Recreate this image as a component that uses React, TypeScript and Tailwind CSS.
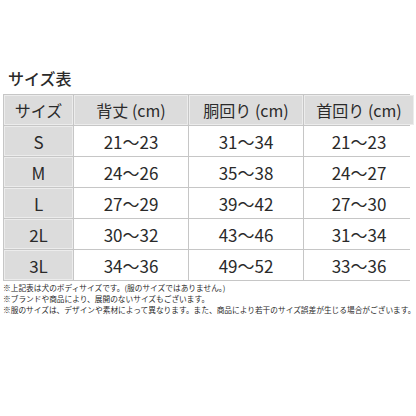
import React from "react";

const headers = ["サイズ", "背丈 (cm)", "胴回り (cm)", "首回り (cm)"];
const rows = [
  ["S", "21〜23", "31〜34", "21〜23"],
  ["M", "24〜26", "35〜38", "24〜27"],
  ["L", "27〜29", "39〜42", "27〜30"],
  ["2L", "30〜32", "43〜46", "31〜34"],
  ["3L", "34〜36", "49〜52", "33〜36"],
];

export default function App() {
  return (
    <div
      className="w-[416px] h-[416px] bg-white overflow-hidden text-[#2a2a2a]"
      style={{ fontFamily: '"Noto Sans CJK JP", "Noto Sans", sans-serif' }}
    >
      <div className="pt-[67px] pl-[8px] text-[16px] leading-[22px] font-medium">サイズ表</div>
      <div className="mt-[5px] ml-[3px] w-[407px] grid grid-cols-[69px_114px_114px_110px] grid-rows-[30px_30px_30px_30px_30px_30px] gap-px bg-[#c6c6c6] p-px">
        {headers.map((h) => (
          <div
            key={h}
            className="bg-[#dcdcdc] shadow-[inset_0_0_0_1px_#ececec] flex items-center justify-center text-[16px] leading-none"
          >
            {h}
          </div>
        ))}
        {rows.map((r) =>
          r.map((c, i) => (
            <div
              key={r[0] + i}
              className={
                i === 0
                  ? "bg-[#dcdcdc] shadow-[inset_0_0_0_1px_#ececec] flex items-center justify-center text-[17px] leading-none"
                  : "bg-white flex items-center justify-center text-[17px] leading-none"
              }
            >
              {c}
            </div>
          ))
        )}
      </div>
      <div className="mt-[1px] ml-[3px] text-[7.7px] leading-[11px] text-[#2a2a2a] whitespace-nowrap">
        <div>※上記表は犬のボディサイズです。(服のサイズではありません。)</div>
        <div>※ブランドや商品により、展開のないサイズもございます。</div>
        <div>※服のサイズは、デザインや素材によって異なります。また、商品により若干のサイズ誤差が生じる場合がございます。</div>
      </div>
    </div>
  );
}
